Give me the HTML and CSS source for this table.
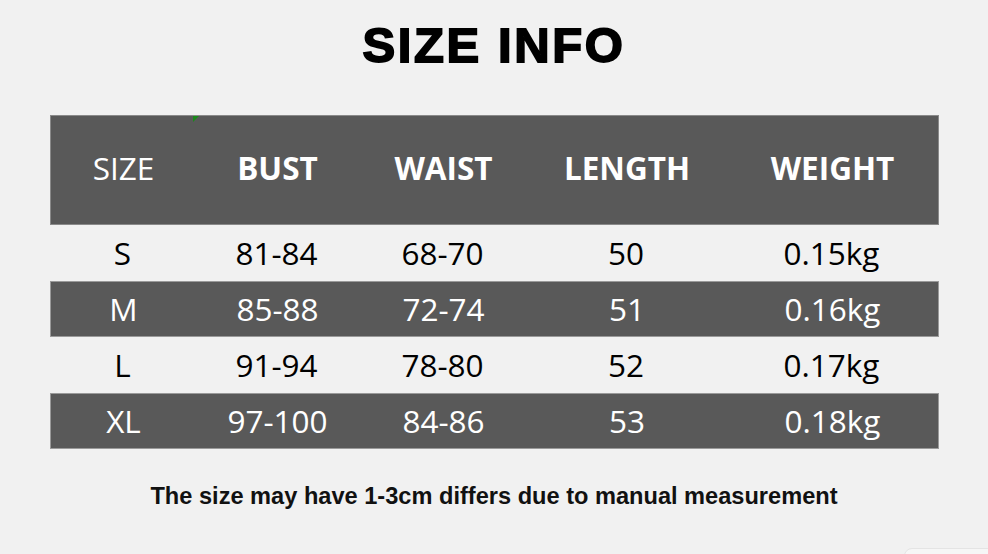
FILE: index.html
```html
<!DOCTYPE html>
<html>
<head>
<meta charset="utf-8">
<link rel="stylesheet" href="styles.css">
</head>
<body>
<div class="page">
  <h1 class="title">SIZE INFO</h1>
  <div class="table">
    <div class="row head">
      <div class="cell reg">SIZE</div>
      <div class="cell">BUST</div>
      <div class="cell">WAIST</div>
      <div class="cell">LENGTH</div>
      <div class="cell">WEIGHT</div>
      <span class="flag"></span>
    </div>
    <div class="row light">
      <div class="cell">S</div><div class="cell">81-84</div><div class="cell">68-70</div><div class="cell">50</div><div class="cell">0.15kg</div>
    </div>
    <div class="row dark">
      <div class="cell">M</div><div class="cell">85-88</div><div class="cell">72-74</div><div class="cell">51</div><div class="cell">0.16kg</div>
    </div>
    <div class="row light">
      <div class="cell">L</div><div class="cell">91-94</div><div class="cell">78-80</div><div class="cell">52</div><div class="cell">0.17kg</div>
    </div>
    <div class="row dark">
      <div class="cell">XL</div><div class="cell">97-100</div><div class="cell">84-86</div><div class="cell">53</div><div class="cell">0.18kg</div>
    </div>
  </div>
  <p class="note">The size may have 1-3cm differs due to manual measurement</p>
  <span class="corner"></span>
</div>
</body>
</html>
```
FILE: styles.css
```css
html, body {
  margin: 0;
  padding: 0;
  background: #f1f1f1;
}
.page {
  position: relative;
  width: 988px;
  height: 554px;
  overflow: hidden;
  display: flex;
  flex-direction: column;
  align-items: center;
}
.title {
  margin: 18px 0 0 0;
  font-family: "Liberation Sans", Arial, sans-serif;
  font-weight: 700;
  font-size: 49px;
  line-height: 54px;
  letter-spacing: 2.6px;
  color: #000;
  -webkit-text-stroke: 1.8px #000;
}
.table {
  margin-top: 43px;
  width: 889px;
  display: flex;
  flex-direction: column;
  font-family: "Open Sans", "Noto Sans", sans-serif;
  font-size: 31.5px;
}
.row {
  position: relative;
  display: grid;
  grid-template-columns: 146px 162px 170px 197px 214px;
  height: 56px;
  align-items: center;
  box-sizing: border-box;
}
.cell {
  text-align: center;
  line-height: 1;
}
.head {
  height: 110px;
  background: #595959;
  color: #fff;
  font-weight: 700;
  border: 1px solid #8a8a8a;
  padding-bottom: 5px;
}
.head .reg {
  font-weight: 400;
}
.flag {
  position: absolute;
  left: 142px;
  top: 0;
  width: 0;
  height: 0;
  border-top: 6px solid #1a8a1a;
  border-right: 6px solid transparent;
}
.dark {
  background: #595959;
  color: #fff;
  border: 1px solid #9a9a9a;
}
.light {
  background: #f1f1f1;
  color: #000;
}
.note {
  margin: 34px 0 0 0;
  font-family: "Liberation Sans", Arial, sans-serif;
  font-weight: 700;
  font-size: 23.6px;
  color: #111;
}
.corner {
  position: absolute;
  left: 904px;
  top: 548px;
  width: 120px;
  height: 30px;
  border-radius: 8px;
  background: #f6f6f6;
  border: 1px solid #e4e4e4;
}
```
